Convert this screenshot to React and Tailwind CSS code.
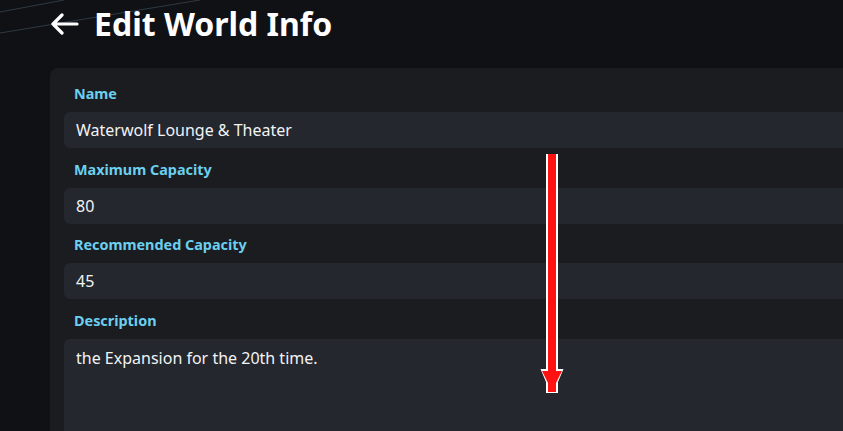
import React from "react";

function Field({ label, value }) {
  return (
    <div className="flex flex-col">
      <label className="pl-[10px] text-[14.4px] leading-[20px] font-bold text-[#6ccfee] mb-2">
        {label}
      </label>
      <div className="h-9 rounded-md bg-[#24272e] px-3 flex items-center text-[16px] text-[#f2f3f5]">
        {value}
      </div>
    </div>
  );
}

export default function App() {
  return (
    <div className="relative h-[431px] w-[843px] overflow-hidden bg-[#101115] font-['Noto_Sans','Open_Sans',sans-serif]">
      <svg className="absolute left-0 top-0" width="220" height="40" viewBox="0 0 220 40">
        <line x1="0" y1="12" x2="64" y2="0" stroke="#2e3a44" strokeWidth="1" />
        <line x1="0" y1="33" x2="200" y2="0" stroke="#2e3a44" strokeWidth="1" />
      </svg>
      <div className="relative flex items-center h-[48px] pl-[50px] gap-[15px]">
        <svg width="29" height="22" viewBox="0 0 29 22" fill="none">
          <path d="M27 11H3M12 2L3 11l9 9" stroke="#ffffff" strokeWidth="3.2" strokeLinecap="round" strokeLinejoin="round" />
        </svg>
        <h1 className="text-[32px] font-bold text-white leading-none tracking-[0px]">Edit World Info</h1>
      </div>
      <div className="ml-[50px] mt-[20px] w-[860px] rounded-tl-lg bg-[#1a1c20] pt-4 pl-[14px] h-[400px]">
        <div className="flex flex-col gap-[11.5px]">
          <Field label="Name" value="Waterwolf Lounge & Theater" />
          <Field label="Maximum Capacity" value="80" />
          <Field label="Recommended Capacity" value="45" />
          <div className="flex flex-col">
            <label className="pl-[10px] text-[14.4px] leading-[20px] font-bold text-[#6ccfee] mb-2">Description</label>
            <div className="h-[120px] rounded-md bg-[#24272e] px-3 pt-[7px] text-[16px] text-[#f2f3f5]">
              the Expansion for the 20th time.
            </div>
          </div>
        </div>
      </div>
      <svg className="absolute left-[540px] top-[153px]" width="24" height="241" viewBox="0 0 24 241">
        <path d="M6 1H18V216H23.5L18 229V240H6V229L0.5 216H6Z" fill="#ffffff" />
        <path d="M8 1H16V218H8Z" fill="#ff1212" />
        <path d="M2 218H22L16 230H8Z" fill="#ff1212" />
        <path d="M8 229H16V239H8Z" fill="#ff1212" />
      </svg>
    </div>
  );
}
